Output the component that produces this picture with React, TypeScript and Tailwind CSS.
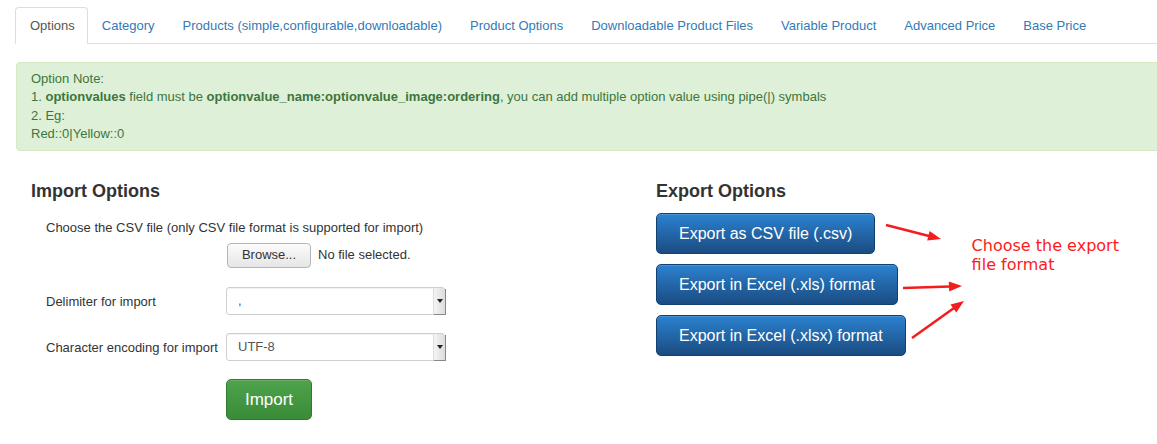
const tabs = [
  "Options",
  "Category",
  "Products (simple,configurable,downloadable)",
  "Product Options",
  "Downloadable Product Files",
  "Variable Product",
  "Advanced Price",
  "Base Price",
];

function FakeSelect({ value }: { value: string }) {
  return (
    <div className="flex h-[28px] w-[219px] items-center rounded-[3px] border border-[#cfcfcf] bg-white pl-[11px] text-[13px] text-[#555] shadow-[inset_0_1px_1px_rgba(0,0,0,0.06)]">
      <span className="flex-1">{value}</span>
      <span className="mr-[-1px] flex h-[26px] w-[12px] items-center justify-center border-l border-[#ddd] bg-linear-to-r from-[#f4f4f4] to-[#dcdcdc] shadow-[1px_1px_0_#888]">
        <svg width="6" height="4" viewBox="0 0 6 4">
          <path d="M0 0h6L3 4z" fill="#222" />
        </svg>
      </span>
    </div>
  );
}

function ExportButton({ label }: { label: string }) {
  return (
    <button className="h-[41px] self-start rounded-[5px] border border-[#12406f] bg-linear-to-b from-[#2b82d0] to-[#1b4c82] px-[22px] pt-[2px] text-[16px] text-white shadow-[inset_0_1px_0_rgba(255,255,255,0.15)]">
      {label}
    </button>
  );
}

export default function App() {
  return (
    <div
      className="h-[444px] w-[1157px] overflow-hidden bg-white text-[13px] leading-[1.42857] text-[#333]"
      style={{ fontFamily: '"Liberation Sans", Arial, sans-serif' }}
    >
      <div className="w-[1180px] pl-[15px] pt-[7px]">
        {/* tabs */}
        <ul className="flex border-b border-[#ddd]">
          {tabs.map((t, i) => (
            <li
              key={t}
              className={
                i === 0
                  ? "mb-[-1px] rounded-t-[4px] border border-[#ddd] border-b-white bg-white pl-[14px] pr-[12px] pt-[9px] pb-[7px] text-[#555]"
                  : "mb-[-1px] border border-transparent px-[13px] pt-[9px] pb-[7px] text-[#337ab7]"
              }
            >
              {t}
            </li>
          ))}
        </ul>

        {/* note */}
        <div className="ml-[1px] mt-[18px] rounded-[4px] border border-[#d6e9c6] bg-[#dff0d8] pb-[6px] pl-[14px] pt-[7px] text-[#3c763d]">
          <div>Option Note:</div>
          <div>
            1. <b>optionvalues</b> field must be{" "}
            <b>optionvalue_name:optionvalue_image:ordering</b>, you can add
            multiple option value using pipe(|) symbals
          </div>
          <div>2. Eg:</div>
          <div>Red::0|Yellow::0</div>
        </div>

        <div className="ml-[1px] mt-[29px] flex">
          {/* import */}
          <div className="w-[625px] pl-[15px]">
            <h3 className="text-[18px] font-bold leading-[22px]">
              Import Options
            </h3>
            <div className="mt-[17px] pl-[15px]">
              <div className="leading-[18px]">
                Choose the CSV file (only CSV file format is supported for
                import)
              </div>
              <div className="mt-[6px] flex items-center pl-[181px]">
                <button className="h-[25px] w-[84px] rounded-[4px] border border-[#b5b5b5] bg-linear-to-b from-[#fbfbfb] to-[#e6e6e6] text-[13px] text-[#333]">
                  Browse...
                </button>
                <span className="ml-[7px]">No file selected.</span>
              </div>
              <div className="mt-[19px] flex items-center">
                <label className="w-[180px] pt-[2px]">Delimiter for import</label>
                <FakeSelect value="," />
              </div>
              <div className="mt-[18px] flex items-center">
                <label className="w-[180px] pt-[2px]">
                  Character encoding for import
                </label>
                <FakeSelect value="UTF-8" />
              </div>
              <div className="mt-[18px] pl-[180px]">
                <button className="h-[41px] w-[86px] rounded-[5px] border border-[#2f7a2f] bg-linear-to-b from-[#4fa34c] to-[#3a8b38] pt-[2px] text-[17px] text-white shadow-[inset_0_1px_0_rgba(255,255,255,0.15)]">
                  Import
                </button>
              </div>
            </div>
          </div>

          {/* export */}
          <div className="pl-[15px]">
            <h3 className="text-[18px] font-bold leading-[22px]">
              Export Options
            </h3>
            <div className="mt-[11px] flex">
              <div className="flex flex-col gap-[10px]">
                <ExportButton label="Export as CSV file (.csv)" />
                <ExportButton label="Export in Excel (.xls) format" />
                <ExportButton label="Export in Excel (.xlsx) format" />
              </div>
              <div className="relative w-[260px]">
                <svg
                  className="absolute left-[-30px] top-0"
                  width="130"
                  height="150"
                  viewBox="0 0 130 150"
                >
                  <g stroke="#f21d1d" strokeWidth="2.5" fill="#f21d1d">
                    <line x1="10" y1="12" x2="53" y2="23" />
                    <path d="M65 26 L51.2 27.6 L53.6 17.9 Z" stroke="none" />
                    <line x1="27" y1="75" x2="74" y2="73.4" />
                    <path d="M86 73 L73.2 78.4 L72.8 68.4 Z" stroke="none" />
                    <line x1="36" y1="125" x2="78" y2="95" />
                    <path d="M88 88 L80.3 99.6 L74.5 91.4 Z" stroke="none" />
                  </g>
                </svg>
                <div
                  className="pl-[66px] pt-[23px] text-[16px] leading-[19px] text-[#ff1a1a]"
                  style={{ fontFamily: '"DejaVu Sans", sans-serif' }}
                >
                  Choose the export
                  <br />
                  file format
                </div>
              </div>
            </div>
          </div>
        </div>
      </div>
    </div>
  );
}
